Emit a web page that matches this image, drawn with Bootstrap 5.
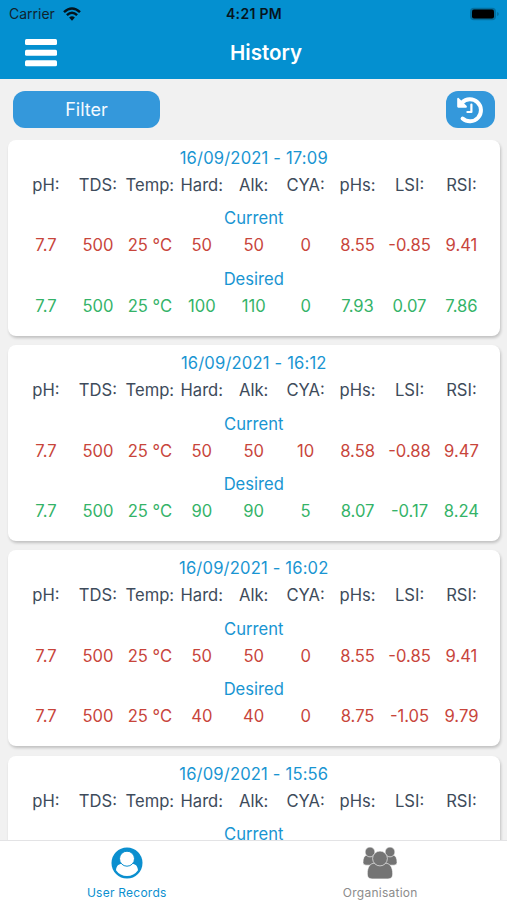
<!DOCTYPE html>
<html lang="en">
<head>
<meta charset="utf-8">
<meta name="viewport" content="width=device-width, initial-scale=1">
<title>History</title>
<link href="https://cdn.jsdelivr.net/npm/bootstrap@5.3.0/dist/css/bootstrap.min.css" rel="stylesheet">
<style>
body { font-family: Inter, "Liberation Sans", sans-serif; background: #f1f1f1; color: #3e4b5b; }
.screen { height: 900px; }
.app-header { background: #0490d0; height: 79px; }
.status { height: 27px; font-size: 14px; line-height: 27px; color: #10232e; padding: 0 8px 0 9px; }
.status-time { color: #06151d; font-size: 14px; letter-spacing: .3px; }
.title-bar { height: 52px; padding: 0 0 0 25px; }
.title-bar h1 { font-size: 20.5px; font-weight: 600; line-height: 52px; }
.toolbar { height: 61px; padding: 12px 12.5px 0 13px; }
.pill { height: 37px; border-radius: 12px; background: #3498db; color: #f4faff; border: 0; font-size: 18px; }
.pill-filter { width: 147px; }
.pill-history { width: 49px; }
.records { padding: 0 7.5px 0 8px; gap: 9.5px; min-height: 0; }
.record { height: 195.7px; border: 0; border-radius: 8px; box-shadow: 1px 2px 3px rgba(0,0,0,.2); padding: 5px 12px 0; font-size: 16.6px; line-height: 27px; }
.stamp, .part { color: #1995d2; text-align: center; }
.stamp { letter-spacing: .16px; }
.part { margin-top: 6.4px; }
.reds { color: #c8453b; }
.greens { color: #34b368; }
.values > div { padding: 0; text-align: center; white-space: nowrap; }
.tabs { height: 60px; background: #fff; border-top: 1px solid #e3e3e5; font-size: 12px; color: #8c8c8c; z-index: 1; }
.tab-item { padding-top: 6px; gap: 5px; line-height: 17px; letter-spacing: .25px; }
.tab-on { color: #0b8fcf; }
</style>
<script src="https://cdn.jsdelivr.net/npm/bootstrap@5.3.0/dist/js/bootstrap.bundle.min.js"></script>
</head>
<body>
<div class="screen d-flex flex-column overflow-hidden">
  <header class="app-header flex-shrink-0">
    <div class="status row g-0">
      <div class="col d-flex align-items-center gap-2"><span>Carrier</span>
        <svg width="18" height="14" viewBox="0 0 18 14" fill="none" stroke="#04131b" stroke-width="2.5"><path d="M1 5.1Q9-2.2 17 5.1M3.9 8.1Q9 3.3 14.1 8.1"/><path d="M9 13.7 6.1 10.6Q9 8 11.9 10.6Z" fill="#04131b" stroke="none"/></svg>
      </div>
      <div class="col-auto fw-semibold status-time">4:21 PM</div>
      <div class="col d-flex align-items-center justify-content-end">
        <svg width="31" height="14" viewBox="0 0 31 14"><rect x="2" y=".7" width="26" height="12.6" rx="4" fill="#046f9f"/><rect x="4" y="2.6" width="22" height="8.8" rx="2" fill="#000"/><path d="M29.1 5v4q1.7-.7 1.7-2t-1.7-2" fill="#046f9f"/></svg>
      </div>
    </div>
    <div class="title-bar row g-0 align-items-center">
      <div class="col d-flex"><svg width="32" height="28" viewBox="0 0 32 28" fill="#fff"><rect width="32" height="6" rx="1.5"/><rect y="10.7" width="32" height="6" rx="1.5"/><rect y="21.3" width="32" height="6" rx="1.5"/></svg></div>
      <h1 class="col-auto m-0 text-white">History</h1>
      <div class="col"></div>
    </div>
  </header>
  <div class="toolbar d-flex justify-content-between flex-shrink-0">
    <button class="btn pill pill-filter p-0" type="button">Filter</button>
    <button class="btn pill pill-history p-0 d-flex align-items-center justify-content-center" type="button" aria-label="Reset">
      <svg width="28" height="28" viewBox="0 0 28 28" fill="none" stroke="#fff"><path d="M6 6.7A11 11 0 1 1 6.6 22.5" stroke-width="4" stroke-linecap="round"/><path d="M1.2 2.7V10.6Q1.2 11.7 2.3 11.7H10.2Q11.5 11.1 10.7 10L2.6 1.9Q1.5 1.5 1.2 2.7Z" fill="#fff" stroke="none"/><path d="M15.4 8.6V16H11.4" stroke-width="2.2" stroke-linecap="round" stroke-linejoin="round"/></svg>
    </button>
  </div>
  <main class="records d-flex flex-column flex-grow-1 overflow-hidden">
    <section class="card record flex-shrink-0">
      <div class="stamp">16/09/2021 - 17:09</div>
      <div class="row g-0 values"><div class="col">pH:</div><div class="col">TDS:</div><div class="col">Temp:</div><div class="col">Hard:</div><div class="col">Alk:</div><div class="col">CYA:</div><div class="col">pHs:</div><div class="col">LSI:</div><div class="col">RSI:</div></div>
      <div class="part">Current</div>
      <div class="row g-0 values reds"><div class="col">7.7</div><div class="col">500</div><div class="col">25 °C</div><div class="col">50</div><div class="col">50</div><div class="col">0</div><div class="col">8.55</div><div class="col">-0.85</div><div class="col">9.41</div></div>
      <div class="part">Desired</div>
      <div class="row g-0 values greens"><div class="col">7.7</div><div class="col">500</div><div class="col">25 °C</div><div class="col">100</div><div class="col">110</div><div class="col">0</div><div class="col">7.93</div><div class="col">0.07</div><div class="col">7.86</div></div>
    </section>
    <section class="card record flex-shrink-0">
      <div class="stamp">16/09/2021 - 16:12</div>
      <div class="row g-0 values"><div class="col">pH:</div><div class="col">TDS:</div><div class="col">Temp:</div><div class="col">Hard:</div><div class="col">Alk:</div><div class="col">CYA:</div><div class="col">pHs:</div><div class="col">LSI:</div><div class="col">RSI:</div></div>
      <div class="part">Current</div>
      <div class="row g-0 values reds"><div class="col">7.7</div><div class="col">500</div><div class="col">25 °C</div><div class="col">50</div><div class="col">50</div><div class="col">10</div><div class="col">8.58</div><div class="col">-0.88</div><div class="col">9.47</div></div>
      <div class="part">Desired</div>
      <div class="row g-0 values greens"><div class="col">7.7</div><div class="col">500</div><div class="col">25 °C</div><div class="col">90</div><div class="col">90</div><div class="col">5</div><div class="col">8.07</div><div class="col">-0.17</div><div class="col">8.24</div></div>
    </section>
    <section class="card record flex-shrink-0">
      <div class="stamp">16/09/2021 - 16:02</div>
      <div class="row g-0 values"><div class="col">pH:</div><div class="col">TDS:</div><div class="col">Temp:</div><div class="col">Hard:</div><div class="col">Alk:</div><div class="col">CYA:</div><div class="col">pHs:</div><div class="col">LSI:</div><div class="col">RSI:</div></div>
      <div class="part">Current</div>
      <div class="row g-0 values reds"><div class="col">7.7</div><div class="col">500</div><div class="col">25 °C</div><div class="col">50</div><div class="col">50</div><div class="col">0</div><div class="col">8.55</div><div class="col">-0.85</div><div class="col">9.41</div></div>
      <div class="part">Desired</div>
      <div class="row g-0 values reds"><div class="col">7.7</div><div class="col">500</div><div class="col">25 °C</div><div class="col">40</div><div class="col">40</div><div class="col">0</div><div class="col">8.75</div><div class="col">-1.05</div><div class="col">9.79</div></div>
    </section>
    <section class="card record flex-shrink-0">
      <div class="stamp">16/09/2021 - 15:56</div>
      <div class="row g-0 values"><div class="col">pH:</div><div class="col">TDS:</div><div class="col">Temp:</div><div class="col">Hard:</div><div class="col">Alk:</div><div class="col">CYA:</div><div class="col">pHs:</div><div class="col">LSI:</div><div class="col">RSI:</div></div>
      <div class="part">Current</div>
    </section>
  </main>
  <nav class="tabs row g-0 flex-shrink-0">
    <div class="col tab-item tab-on d-flex flex-column align-items-center">
      <svg width="32" height="32" viewBox="0 0 32 32"><circle cx="16" cy="16" r="15.5" fill="#0b8fcf"/><path d="M5 23.3C5.3 18.9 7.8 16.8 11.2 16.8Q16 20.6 20.8 16.8C24.2 16.8 26.7 18.9 27 23.3A13.3 13.3 0 0 1 5 23.3Z" fill="#fff"/><circle cx="16" cy="11.7" r="7.5" fill="#fff" stroke="#0b8fcf" stroke-width="1"/></svg>
      <span>User Records</span>
    </div>
    <div class="col tab-item d-flex flex-column align-items-center">
      <svg width="34" height="32" viewBox="0 0 34 32" fill="#747474" stroke="#fff" stroke-width=".6"><path d="M0 15.5Q0 8.8 4 8Q7 10.5 10 8L14 18.2H3Q0 18.2 0 15.5ZM34 15.5Q34 8.8 30 8Q27 10.5 24 8L20 18.2H31Q34 18.2 34 15.5Z"/><circle cx="7" cy="5" r="4.9"/><circle cx="27" cy="5" r="4.9"/><path d="M4.3 27C4.3 20 7.1 16.2 11.7 16.2Q17 20 22.3 16.2C26.9 16.2 29.7 20 29.7 27Q29.7 31.9 25 31.9H9Q4.3 31.9 4.3 27Z"/><circle cx="17" cy="11.5" r="7.4"/></svg>
      <span>Organisation</span>
    </div>
  </nav>
</div>
</body>
</html>
